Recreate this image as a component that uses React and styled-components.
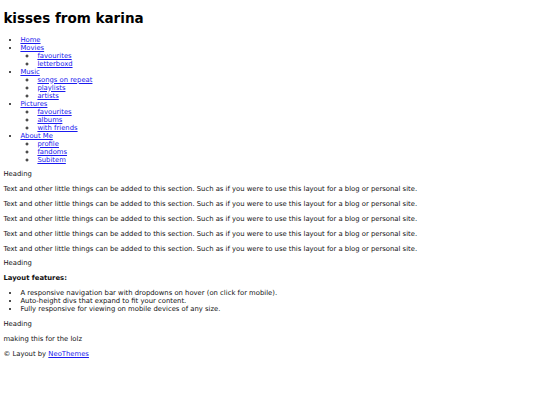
import styled, { createGlobalStyle } from 'styled-components'

const GlobalStyle = createGlobalStyle`
  body {
    margin: 3.4px;
    font-family: "DejaVu Sans", Verdana, sans-serif;
    font-size: 6.84px;
    color: #111;
    background: #fff;
  }
  a {
    color: #1a1aee;
  }
`

const Title = styled.h1`
  font-size: 13.5px;
  margin: 7.1px 0 9.1px;
  color: #000;
`

const List = styled.ul`
  margin: ${p => (p.$nested ? '0' : '6.84px 0')};
  padding-left: 17px;
  list-style-type: ${p => (p.$nested ? 'circle' : 'disc')};
`

const Label = styled.div``

const Para = styled.p`
  margin: 6.84px 0;
  font-weight: ${p => (p.$bold ? 'bold' : 'normal')};
`

const nav = [
  { name: 'Home' },
  { name: 'Movies', sub: ['favourites', 'letterboxd'] },
  { name: 'Music', sub: ['songs on repeat', 'playlists', 'artists'] },
  { name: 'Pictures', sub: ['favourites', 'albums', 'with friends'] },
  { name: 'About Me', sub: ['profile', 'fandoms', 'Subitem'] },
]

const blurb = 'Text and other little things can be added to this section. Such as if you were to use this layout for a blog or personal site.'

export default function App() {
  return (
    <>
      <GlobalStyle />
      <Title>kisses from karina</Title>
      <List>
        {nav.map(item => (
          <li key={item.name}>
            <a href="#">{item.name}</a>
            {item.sub && (
              <List $nested>
                {item.sub.map(s => (
                  <li key={s}><a href="#">{s}</a></li>
                ))}
              </List>
            )}
          </li>
        ))}
      </List>

      <Label>Heading</Label>
      {[0, 1, 2, 3, 4].map(i => <Para key={i}>{blurb}</Para>)}

      <Label>Heading</Label>
      <Para $bold>Layout features:</Para>
      <List>
        <li>A responsive navigation bar with dropdowns on hover (on click for mobile).</li>
        <li>Auto-height divs that expand to fit your content.</li>
        <li>Fully responsive for viewing on mobile devices of any size.</li>
      </List>

      <Label>Heading</Label>
      <Para>making this for the lolz</Para>
      <Para>© Layout by <a href="#">NeoThemes</a></Para>
    </>
  )
}
